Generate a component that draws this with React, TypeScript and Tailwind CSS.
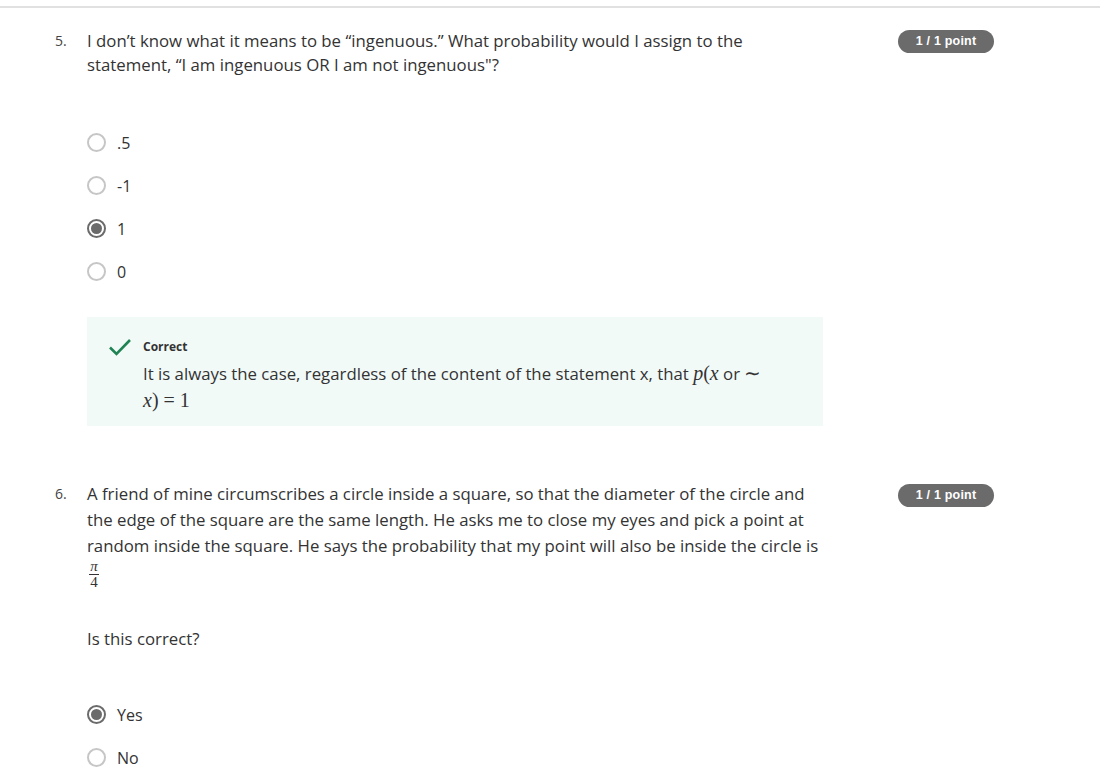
import React from "react";

const textFont = { fontFamily: '"Open Sans", "Noto Sans", sans-serif' };
const mathFont = "font-['Liberation_Serif',serif]";

function Radio({ checked, label }: { checked?: boolean; label: string }) {
  return (
    <div className="flex items-center h-[43px]">
      {checked ? (
        <span className="w-[19px] h-[19px] rounded-full border-[2px] border-[#6b6b6b] flex items-center justify-center">
          <span className="w-[11px] h-[11px] rounded-full bg-[#6b6b6b]" />
        </span>
      ) : (
        <span className="w-[19px] h-[19px] rounded-full border-[2px] border-[#c6c6c6]" />
      )}
      <span className="ml-[11px] text-[16px] text-[#333]">{label}</span>
    </div>
  );
}

function PointBadge() {
  return (
    <span className="inline-flex items-center justify-center w-[96px] h-[23px] rounded-full bg-[#6b6b6b] text-white text-[12.5px] font-bold tracking-[0.2px] font-['Liberation_Sans',Arial,sans-serif]">
      1 / 1 point
    </span>
  );
}

export default function App() {
  return (
    <div className="w-[1100px] min-h-[770px] bg-white text-[#333]" style={textFont}>
      <div className="h-[6px]" />
      <div className="h-[2px] bg-[#e1e1e1]" />

      <div className="flex pl-[55px] pt-[21px]">
        <span className="w-[32px] text-[14px] leading-[24px] text-[#444]">5.</span>
        <div className="w-[736px]">
          <p className="text-[16.8px] leading-[24px]">
            I don’t know what it means to be “ingenuous.” What probability would I assign to the statement, “I am ingenuous OR I am not ingenuous"?
          </p>
          <div className="mt-[44px]">
            <Radio label=".5" />
            <Radio label="-1" />
            <Radio checked label="1" />
            <Radio label="0" />
          </div>
          <div className="mt-[24px] bg-[#f2faf8] h-[109px] flex pl-[21px] pt-[20px]">
            <svg width="24" height="20" viewBox="0 0 24 20">
              <path d="M2 10.5 L8.5 17 L22 3" fill="none" stroke="#1f8354" strokeWidth="2.6" />
            </svg>
            <div className="ml-[11px]">
              <div className="text-[12px] font-bold leading-[18px] mt-[1px] text-[#333]">Correct</div>
              <p className="mt-[4px] text-[16.8px] leading-[27px] w-[640px]">
                It is always the case, regardless of the content of the statement x, that{" "}
                <span className={`${mathFont} italic text-[20px]`}>p</span>
                <span className={`${mathFont} text-[20px]`}>(</span>
                <span className={`${mathFont} italic text-[20px]`}>x</span> or{" "}
                <span className={`${mathFont} text-[20px]`}>∼</span>
                <br />
                <span className={`${mathFont} italic text-[20px]`}>x</span>
                <span className={`${mathFont} text-[20px]`}>) = 1</span>
              </p>
            </div>
          </div>
        </div>
        <div className="ml-[75px] mt-[-2px]">
          <PointBadge />
        </div>
      </div>

      <div className="flex pl-[55px] pt-[55px]">
        <span className="w-[32px] text-[14px] leading-[26px] text-[#444]">6.</span>
        <div className="w-[736px]">
          <p className="text-[16.8px] leading-[26px]">
            A friend of mine circumscribes a circle inside a square, so that the diameter of the circle and the edge of the square are the same length. He asks me to close my eyes and pick a point at random inside the square. He says the probability that my point will also be inside the circle is
          </p>
          <div className={`${mathFont} flex flex-col items-center w-[14px] mt-[1px] text-[15px] leading-[13px]`}>
            <span className="italic">π</span>
            <span className="w-[10px] h-[1px] bg-[#333] my-[1px]" />
            <span>4</span>
          </div>
          <p className="mt-[38px] text-[16.8px] leading-[24px]">Is this correct?</p>
          <div className="mt-[42px]">
            <Radio checked label="Yes" />
            <Radio label="No" />
          </div>
        </div>
        <div className="ml-[75px] mt-[0px]">
          <PointBadge />
        </div>
      </div>
    </div>
  );
}
